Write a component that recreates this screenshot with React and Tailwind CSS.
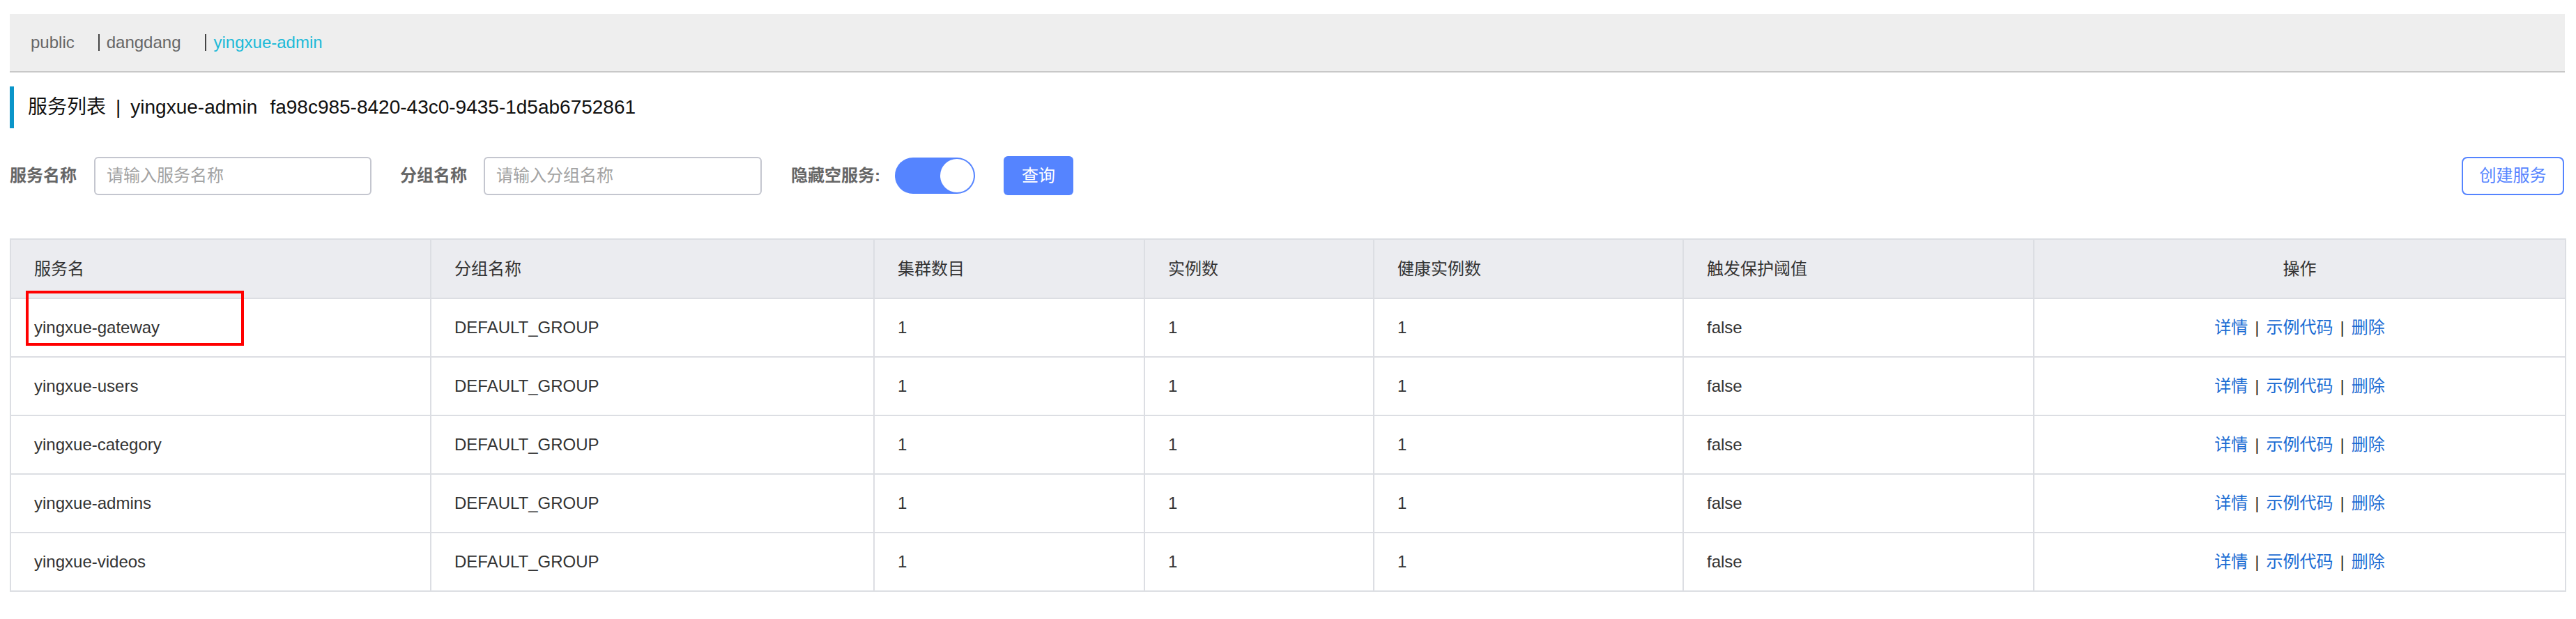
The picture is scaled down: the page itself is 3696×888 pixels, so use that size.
import React from "react"

const rows = [
  "yingxue-gateway",
  "yingxue-users",
  "yingxue-category",
  "yingxue-admins",
  "yingxue-videos",
]

const cols = [
  { title: "服务名", w: "w-[603px]" },
  { title: "分组名称", w: "w-[636px]" },
  { title: "集群数目", w: "w-[388px]" },
  { title: "实例数", w: "w-[329px]" },
  { title: "健康实例数", w: "w-[444px]" },
  { title: "触发保护阈值", w: "w-[503px]" },
  { title: "操作", w: "w-[763px]" },
]

export default function App() {
  return (
    <div className="pt-[20px] pl-[14px] w-[3696px] bg-white font-['Liberation_Sans','Noto_Sans_CJK_SC',sans-serif] text-[#333]">
      <div className="w-[3666px]">
        {/* namespace tabs */}
        <div className="h-[84px] bg-[#eeeeee] border-b-[2px] border-[#c8c8c8] flex items-center pl-[30px] text-[24px]">
          <span className="text-[#666] pr-[34px]">public</span>
          <span className="w-[2px] h-[24px] bg-[#444] mr-[10px]"></span>
          <span className="text-[#666] pr-[34px]">dangdang</span>
          <span className="w-[2px] h-[24px] bg-[#444] mr-[11px]"></span>
          <span className="text-[#1cbad8]">yingxue-admin</span>
        </div>

        {/* title */}
        <div className="mt-[20px] h-[60px] flex items-center border-l-[6px] border-[#0a95c9] pl-[20px] text-[28px] text-[#111]">
          <span>服务列表</span>
          <span className="mx-[14px]">|</span>
          <span>yingxue-admin</span>
          <span className="ml-[18px]">fa98c985-8420-43c0-9435-1d5ab6752861</span>
        </div>

        {/* filters */}
        <div className="mt-[40px] h-[56px] flex items-center text-[24px]">
          <span className="font-bold text-[#666] w-[94px] whitespace-nowrap">服务名称</span>
          <div className="ml-[27px] w-[398px] h-[55px] border-[2px] border-[#c4c6cf] rounded-[6px] flex items-center pl-[16px] text-[#a3a3a3]">
            请输入服务名称
          </div>
          <span className="ml-[41px] font-bold text-[#666] w-[96px] whitespace-nowrap">分组名称</span>
          <div className="ml-[24px] w-[399px] h-[55px] border-[2px] border-[#c4c6cf] rounded-[6px] flex items-center pl-[16px] text-[#a3a3a3]">
            请输入分组名称
          </div>
          <span className="ml-[42px] font-bold text-[#666] w-[125px] whitespace-nowrap">隐藏空服务:</span>
          <div className="ml-[24px] w-[115px] h-[52px] rounded-full bg-[#5584ff] flex items-center justify-end pr-[2px]">
            <div className="w-[48px] h-[48px] rounded-full bg-white"></div>
          </div>
          <button className="ml-[41px] w-[100px] h-[56px] rounded-[6px] bg-[#5584ff] text-white text-[24px]">
            查询
          </button>
          <div className="flex-1"></div>
          <button className="mr-[1px] w-[147px] h-[55px] rounded-[8px] border-[2px] border-[#5584ff] text-[#5584ff] bg-white text-[24px]">
            创建服务
          </button>
        </div>

        {/* table */}
        <div className="relative mt-[62px]">
          <table className="table-fixed border-collapse w-[3666px] text-[24px]">
            <thead>
              <tr className="bg-[#ebecf0]">
                {cols.map((c, i) => (
                  <th
                    key={c.title}
                    className={`${c.w} h-[85px] border-[2px] border-[#dcdee3] font-normal text-[#333] ${i === 6 ? "text-center" : "text-left pl-[33px]"}`}
                  >
                    {c.title}
                  </th>
                ))}
              </tr>
            </thead>
            <tbody>
              {rows.map((name) => (
                <tr key={name}>
                  <td className="h-[84px] border-[2px] border-[#dcdee3] pl-[33px]">{name}</td>
                  <td className="border-[2px] border-[#dcdee3] pl-[33px]">DEFAULT_GROUP</td>
                  <td className="border-[2px] border-[#dcdee3] pl-[33px]">1</td>
                  <td className="border-[2px] border-[#dcdee3] pl-[33px]">1</td>
                  <td className="border-[2px] border-[#dcdee3] pl-[33px]">1</td>
                  <td className="border-[2px] border-[#dcdee3] pl-[33px]">false</td>
                  <td className="border-[2px] border-[#dcdee3] text-center">
                    <span className="text-[#1a6bd3]">详情</span>
                    <span className="mx-[10px] text-[#333]">|</span>
                    <span className="text-[#1a6bd3]">示例代码</span>
                    <span className="mx-[10px] text-[#333]">|</span>
                    <span className="text-[#1a6bd3]">删除</span>
                  </td>
                </tr>
              ))}
            </tbody>
          </table>
          <div className="absolute left-[23px] top-[75px] w-[313px] h-[79px] border-[4px] border-[#ff0000]"></div>
        </div>
      </div>
    </div>
  )
}
